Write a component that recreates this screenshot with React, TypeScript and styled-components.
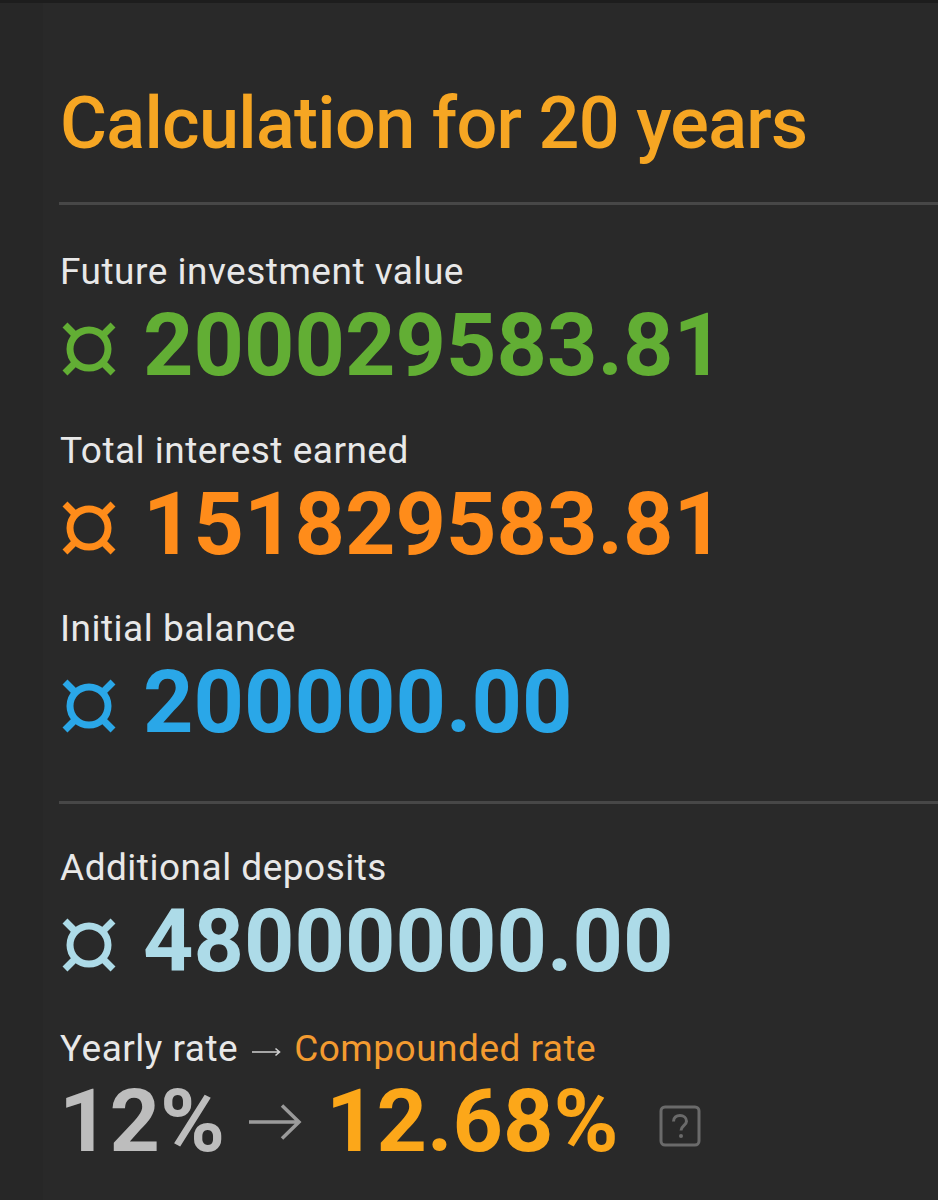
import React from 'react';
import styled, { createGlobalStyle } from 'styled-components';

const GlobalStyle = createGlobalStyle`
  html, body {
    margin: 0;
    padding: 0;
    background: #272727;
  }
  body {
    font-family: Roboto, "Noto Sans", "Liberation Sans", sans-serif;
  }
`;

const Page = styled.div`
  min-height: 1200px;
  border-top: 3px solid #1d1d1d;
  box-sizing: border-box;
  display: flex;
`;

const Panel = styled.section`
  flex: 1;
  margin-left: 43px;
  padding-left: 16px;
  background: #292929;
  display: flex;
  flex-direction: column;
`;

const Title = styled.h1`
  margin: 85px 0 0 1px;
  font-size: 72px;
  line-height: 1;
  font-weight: 500;
  letter-spacing: -0.7px;
  color: #f6a623;
`;

const Divider = styled.hr<{ $top: number; $bottom: number }>`
  margin: ${(p) => p.$top}px 0 ${(p) => p.$bottom}px 0;
  border: 0;
  height: 3px;
  background: #474747;
`;

const Stat = styled.div<{ $gap: number }>`
  display: flex;
  flex-direction: column;
  gap: 11px;
  margin-bottom: ${(p) => p.$gap}px;
`;

const Label = styled.div`
  font-size: 37px;
  line-height: 1;
  letter-spacing: 0.5px;
  color: #e8e8e8;
  padding-left: 1px;
`;

const Amount = styled.div<{ $color: string }>`
  display: flex;
  align-items: center;
  gap: 26px;
  font-size: 88px;
  line-height: 1;
  font-weight: 700;
  color: ${(p) => p.$color};
`;

const Coin = styled.svg`
  width: 56px;
  height: 56px;
  flex: none;
  margin: 8px 0 0 2px;
`;

const RateLabel = styled(Label)`
  display: flex;
  align-items: baseline;
  gap: 13px;
`;

const SmallArrow = styled.svg`
  width: 30px;
  height: 10px;
  flex: none;
  align-self: center;
  margin-top: 6px;
`;

const Accent = styled.span`
  color: #f39b30;
`;

const RateRow = styled.div`
  display: flex;
  align-items: center;
  font-size: 88px;
  line-height: 1;
  font-weight: 700;
  margin-top: 10px;
`;

const Rate = styled.span<{ $color: string }>`
  color: ${(p) => p.$color};
`;

const BigArrow = styled.svg`
  width: 54px;
  height: 38px;
  flex: none;
  margin: 2px 24px 0 23px;
`;

const HelpIcon = styled.svg`
  width: 42px;
  height: 42px;
  margin: 10px 0 0 40px;
  flex: none;
`;

const CurrencySign = () => (
  <Coin viewBox="0 0 56 56">
    <circle cx="28" cy="28" r="19" fill="none" stroke="currentColor" strokeWidth="7" />
    <path
      d="M4 4 L14.5 14.5 M52 4 L41.5 14.5 M4 52 L14.5 41.5 M52 52 L41.5 41.5"
      stroke="currentColor"
      strokeWidth="7"
    />
  </Coin>
);

const stats = [
  { label: 'Future investment value', value: '200029583.81', color: '#62ae34', gap: 43 },
  { label: 'Total interest earned', value: '151829583.81', color: '#ff8c1a', gap: 42 },
  { label: 'Initial balance', value: '200000.00', color: '#2aa7e8', gap: 0 },
];

const App = () => (
  <>
    <GlobalStyle />
    <Page>
      <Panel>
        <Title>Calculation for 20 years</Title>
        <Divider $top={42} $bottom={48} />
        {stats.map((s) => (
          <Stat key={s.label} $gap={s.gap}>
            <Label>{s.label}</Label>
            <Amount $color={s.color}>
              <CurrencySign />
              {s.value}
            </Amount>
          </Stat>
        ))}
        <Divider $top={55} $bottom={45} />
        <Stat $gap={45}>
          <Label>Additional deposits</Label>
          <Amount $color="#addbe8">
            <CurrencySign />
            48000000.00
          </Amount>
        </Stat>
        <RateLabel>
          <span>Yearly rate</span>
          <SmallArrow viewBox="0 0 30 10">
            <path d="M1 5 H28.5 M24.5 1.5 L28.5 5 L24.5 8.5" fill="none" stroke="#d0d0d0" strokeWidth="1.6" />
          </SmallArrow>
          <Accent>Compounded rate</Accent>
        </RateLabel>
        <RateRow>
          <Rate $color="#bdbdbd">12%</Rate>
          <BigArrow viewBox="0 0 54 38">
            <path d="M1 19 H51 M34 2.5 L51 19 L34 35.5" fill="none" stroke="#9a9a9a" strokeWidth="3.5" />
          </BigArrow>
          <Rate $color="#fca719">12.68%</Rate>
          <HelpIcon viewBox="0 0 42 42">
            <rect x="2" y="2" width="38" height="38" rx="4" fill="none" stroke="#6a6a6a" strokeWidth="3" />
            <path
              d="M14.5 16.5 C14.5 12.5 17.5 10.5 21 10.5 C24.5 10.5 27.5 12.8 27.5 16.2 C27.5 20.5 22 21 22 25.5"
              fill="none"
              stroke="#6a6a6a"
              strokeWidth="3"
            />
            <circle cx="22" cy="31" r="2" fill="#6a6a6a" />
          </HelpIcon>
        </RateRow>
      </Panel>
    </Page>
  </>
);

export default App;
